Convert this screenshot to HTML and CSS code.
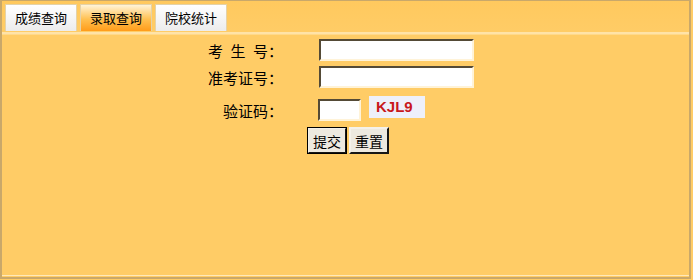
FILE: index.html
```html
<!DOCTYPE html>
<html lang="zh-CN">
<head>
  <meta charset="UTF-8">
  <title>成绩查询</title>
  <link rel="stylesheet" href="styles.css">
</head>
<body>

  <div class="frame">
    <div class="tabs">
      <a class="tab">成绩查询</a>
      <a class="tab active">录取查询</a>
      <a class="tab">院校统计</a>
    </div>

    <div class="panel">
      <form class="query">
        <div class="rows">
          <label class="lbl" for="ksh">考&ensp;生&ensp;号：</label>
          <input class="txt" type="text" id="ksh">
          <label class="lbl" for="zkzh">准考证号：</label>
          <input class="txt" type="text" id="zkzh">
        </div>
        <div class="code-row">
          <label class="lbl" for="yzm">验证码：</label>
          <input class="txt small" type="text" id="yzm">
          <span class="captcha">KJL9</span>
        </div>
        <div class="btns">
          <button type="submit">提交</button>
          <button type="reset">重置</button>
        </div>
      </form>
    </div>
  </div>

</body>
</html>
```

FILE: styles.css
```css
html, body {
  margin: 0;
  padding: 0;
  background: #ffcc66;
}
body {
  font-family: "Noto Sans CJK SC", "DejaVu Sans", sans-serif;
  font-size: 15px;
  color: #000;
}
.frame {
  width: 687px;
  height: 276px;
  border: 2px solid #c9a86a;
  border-top-width: 1px;
  border-bottom-width: 2px;
  background: #ffcc66;
  display: flex;
  flex-direction: column;
}
.tabs {
  height: 31px;
  display: flex;
  align-items: flex-end;
  padding-left: 3px;
  gap: 3px;
  background: linear-gradient(#ffc95e, #ffcc66);
  border-bottom: 2px solid #ffe3a8;
}
.tab {
  height: 26px;
  line-height: 26px;
  padding: 0 9px;
  font-size: 13px;
  background: linear-gradient(#ffffff, #ececec);
  border: 1px solid #e4d2a8;
  border-bottom: none;
  margin-bottom: 1px;
  cursor: pointer;
}
.tab.active {
  background: linear-gradient(#fff4d8 0%, #ffc050 55%, #ff9c1a 100%);
}
.panel {
  flex: 1;
  border-top: 1px solid #ffd98a;
  border-bottom: 1px solid #ffe8b8;
  margin-bottom: 1px;
}
.query {
  padding-top: 4px;
}
.lbl {
  white-space: nowrap;
}
.rows {
  display: grid;
  grid-template-columns: 280px 155px;
  column-gap: 37px;
  row-gap: 5px;
  align-items: center;
}
.rows .lbl {
  justify-self: start;
  margin-left: 206px;
}
.txt {
  width: 155px;
  height: 22px;
  box-sizing: border-box;
  margin: 0;
  border: 2px inset #a8946c;
  border-right-color: #fff3d8;
  border-bottom-color: #fff3d8;
  background: #fff;
  padding: 1px 3px;
  font-size: 13px;
}
.code-row {
  display: flex;
  align-items: center;
  margin-top: 9px;
  height: 24px;
}
.code-row .lbl {
  width: 280px;
  box-sizing: border-box;
  padding-left: 221px;
  margin-top: 3px;
}
.txt.small {
  width: 43px;
  margin-left: 36px;
  margin-top: 2px;
}
.captcha {
  margin-left: 8px;
  margin-top: -4px;
  width: 56px;
  height: 22px;
  line-height: 22px;
  background: #eef0fa;
  color: #c8181c;
  font-family: "Liberation Sans", Arial, sans-serif;
  font-weight: bold;
  font-size: 15px;
  padding-left: 7px;
  box-sizing: border-box;
}
.btns {
  display: flex;
  margin-left: 305px;
  gap: 2px;
  margin-top: 6px;
}
button {
  font-family: "Noto Sans CJK SC", sans-serif;
  font-size: 14px;
  height: 27px;
  padding: 0 4px;
  background: #ede9df;
  border: 2px outset #f4f1ea;
  border-right-color: #6c6a64;
  border-bottom-color: #6c6a64;
  cursor: pointer;
}
button[type="submit"] {
  outline: 1px solid #000;
  outline-offset: -1px;
}
```
